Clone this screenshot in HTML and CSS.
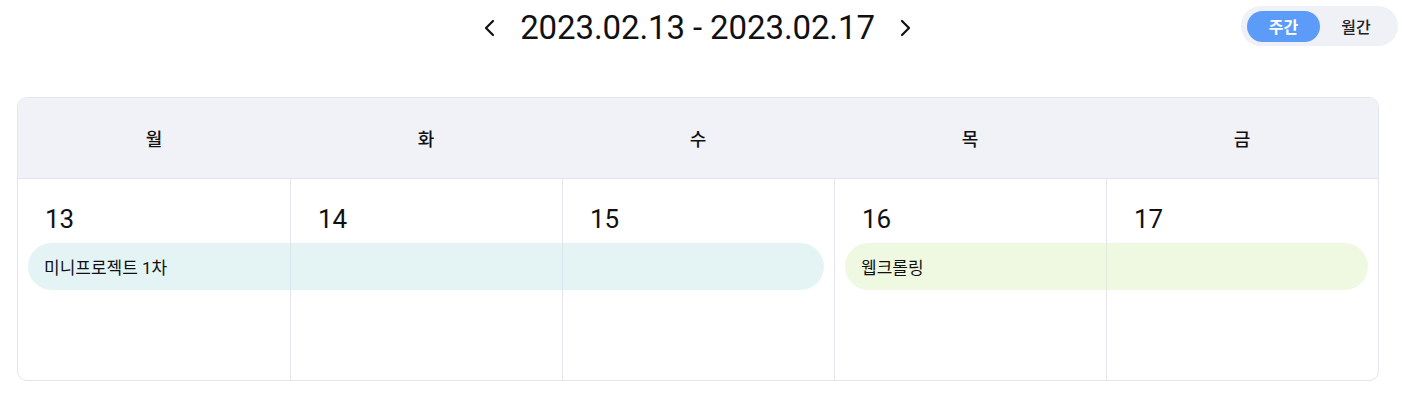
FILE: index.html
```html
<!DOCTYPE html>
<html lang="ko">
<head>
<meta charset="utf-8">
<link rel="stylesheet" href="styles.css">
</head>
<body>
<div class="page">
  <header class="topbar">
    <div></div>
    <div class="range">
      <button class="nav" aria-label="이전">
        <svg width="14" height="20" viewBox="0 0 14 20"><path d="M10 3 L3 10 L10 17" fill="none" stroke="#111" stroke-width="2.2" stroke-linecap="round" stroke-linejoin="round"/></svg>
      </button>
      <h1 class="range-text">2023.02.13 - 2023.02.17</h1>
      <button class="nav" aria-label="다음">
        <svg width="14" height="20" viewBox="0 0 14 20"><path d="M4 3 L11 10 L4 17" fill="none" stroke="#111" stroke-width="2.2" stroke-linecap="round" stroke-linejoin="round"/></svg>
      </button>
    </div>
    <div class="toggle-wrap">
      <div class="toggle">
        <span class="opt active">주간</span>
        <span class="opt">월간</span>
      </div>
    </div>
  </header>

  <section class="calendar">
    <div class="head">
      <div class="wd">월</div>
      <div class="wd">화</div>
      <div class="wd">수</div>
      <div class="wd">목</div>
      <div class="wd">금</div>
    </div>
    <div class="week">
      <div class="day"><span class="num">13</span></div>
      <div class="day"><span class="num">14</span></div>
      <div class="day"><span class="num">15</span></div>
      <div class="day"><span class="num">16</span></div>
      <div class="day"><span class="num">17</span></div>
      <div class="event ev-cyan" style="left:10px;width:796px;">미니프로젝트 1차</div>
      <div class="event ev-green" style="left:827px;width:523px;">웹크롤링</div>
    </div>
  </section>
</div>
</body>
</html>
```

FILE: styles.css
```css
* { box-sizing: border-box; }
html, body { margin: 0; padding: 0; background: #fff; }
body {
  font-family: Roboto, "Noto Sans CJK KR", sans-serif;
  color: #111;
}
.page { width: 1405px; height: 413px; }

.topbar {
  display: grid;
  grid-template-columns: 1fr auto 1fr;
  align-items: center;
  height: 52px;
}
.range {
  display: flex;
  align-items: center;
  gap: 22px;
  margin-left: -10px;
  padding-top: 3px;
}
.nav {
  border: 0;
  background: none;
  padding: 0;
  width: 16px;
  height: 24px;
  display: flex;
  align-items: center;
  justify-content: center;
  cursor: pointer;
}
.range-text {
  margin: 0;
  font-family: Roboto, sans-serif;
  font-weight: 400;
  font-size: 33px;
  letter-spacing: -0.1px;
  line-height: 49px;
  color: #111;
}
.toggle-wrap {
  display: flex;
  justify-content: flex-end;
  padding-right: 7px;
}
.toggle {
  display: flex;
  align-items: center;
  background: #F0F1F7;
  border-radius: 20px;
  padding: 5px 6px;
  height: 40px;
  width: 157px;
}
.opt {
  font-family: "Noto Sans CJK KR", sans-serif;
  font-size: 16px;
  width: 73px;
  height: 31px;
  border-radius: 16px;
  display: flex;
  align-items: center;
  justify-content: center;
  color: #222;
  font-weight: 500;
}
.opt.active {
  background: #5C9BF8;
  color: #fff;
  font-weight: 700;
}
.opt:not(.active) { flex: 1; }

.calendar {
  margin: 45px 26px 0 17px;
  border: 1px solid #E3E4EE;
  border-radius: 10px;
  overflow: hidden;
}
.head {
  display: grid;
  grid-template-columns: repeat(5, 1fr);
  background: #F1F2F8;
  height: 81px;
  border-bottom: 1px solid #E3E4EE;
}
.wd {
  display: flex;
  align-items: center;
  justify-content: center;
  font-family: "Noto Sans CJK KR", sans-serif;
  font-size: 18px;
  font-weight: 500;
  color: #111;
}
.week {
  position: relative;
  display: grid;
  grid-template-columns: repeat(5, 1fr);
  height: 201px;
}
.day {
  border-left: 1px solid #E3E4EE;
  padding: 22px 0 0 27px;
}
.day:first-child { border-left: 0; }
.num {
  font-family: Roboto, sans-serif;
  font-size: 26px;
  line-height: 36px;
  color: #111;
}
.event {
  position: absolute;
  top: 64px;
  height: 47px;
  border-radius: 24px;
  display: flex;
  align-items: center;
  padding-left: 16px;
  font-family: Roboto, "Noto Sans CJK KR", sans-serif;
  font-size: 17px;
  color: #111;
}
.ev-cyan { background: rgba(205, 235, 236, 0.55); }
.ev-green { background: rgba(226, 242, 200, 0.55); }
```
